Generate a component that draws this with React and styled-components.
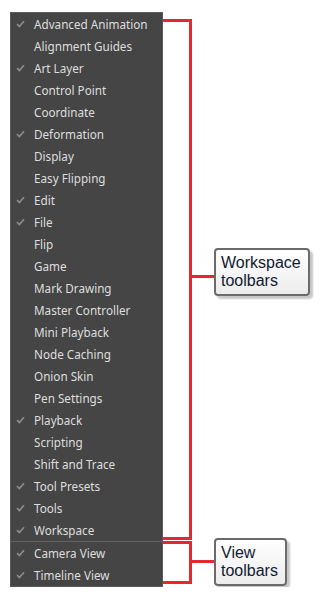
import React from 'react';
import styled, { createGlobalStyle } from 'styled-components';

const GlobalStyle = createGlobalStyle`
  html, body {
    margin: 0;
    padding: 0;
    background: #ffffff;
  }
`;

const RED = '#e3282f';

const workspaceItems = [
  { label: 'Advanced Animation', checked: true },
  { label: 'Alignment Guides' },
  { label: 'Art Layer', checked: true },
  { label: 'Control Point' },
  { label: 'Coordinate' },
  { label: 'Deformation', checked: true },
  { label: 'Display' },
  { label: 'Easy Flipping' },
  { label: 'Edit', checked: true },
  { label: 'File', checked: true },
  { label: 'Flip' },
  { label: 'Game' },
  { label: 'Mark Drawing' },
  { label: 'Master Controller' },
  { label: 'Mini Playback' },
  { label: 'Node Caching' },
  { label: 'Onion Skin' },
  { label: 'Pen Settings' },
  { label: 'Playback', checked: true },
  { label: 'Scripting' },
  { label: 'Shift and Trace' },
  { label: 'Tool Presets', checked: true },
  { label: 'Tools', checked: true },
  { label: 'Workspace', checked: true },
];

const viewItems = [
  { label: 'Camera View', checked: true },
  { label: 'Timeline View', checked: true },
];

const Page = styled.div`
  display: flex;
  align-items: flex-start;
  padding: 12px 0 0 10px;
`;

const Menu = styled.ul`
  list-style: none;
  margin: 0;
  padding: 0;
  width: 151px;
  background: #454545;
  border: 1px solid #5a5a5a;
  font-family: 'Noto Sans', 'Open Sans', sans-serif;
  font-size: 11.7px;
  color: #dedede;
`;

const Item = styled.li`
  display: flex;
  align-items: center;
  height: 22px;
  padding-left: 4px;
  white-space: nowrap;
`;

const CheckSlot = styled.span`
  display: flex;
  align-items: center;
  justify-content: center;
  width: 10px;
  margin-right: 9px;
  color: #8c8c8c;
`;

const Divider = styled.li`
  height: 1px;
  background: #626262;
`;

const Annotations = styled.div`
  display: flex;
  flex-direction: column;
  gap: 1px;
  margin-top: 7px;
`;

const Group = styled.div`
  display: flex;
  align-items: flex-start;
`;

const Bracket = styled.div`
  box-sizing: border-box;
  width: 29px;
  height: ${(p) => p.$height}px;
  border: 3px solid ${RED};
  border-left: none;
`;

const Connector = styled.div`
  width: 22px;
  height: 3px;
  margin-top: ${(p) => p.$top}px;
  background: ${RED};
`;

const Label = styled.div`
  margin-top: ${(p) => p.$top}px;
  padding: 4px 7px 4px 5px;
  border: 2px solid #6b6b6b;
  border-radius: 4px;
  background: linear-gradient(#ffffff, #ececec);
  box-shadow: 3px 3px 2px rgba(0, 0, 0, 0.22);
  font-family: 'Liberation Sans', Arial, sans-serif;
  font-size: 16px;
  line-height: 18px;
  color: #101a30;
`;

function Check() {
  return (
    <svg width="9" height="8" viewBox="0 0 9 8">
      <polyline
        points="1,4.2 3.4,6.6 8,1.2"
        fill="none"
        stroke="currentColor"
        strokeWidth="1.7"
      />
    </svg>
  );
}

function MenuItem({ label, checked }) {
  return (
    <Item>
      <CheckSlot>{checked && <Check />}</CheckSlot>
      {label}
    </Item>
  );
}

function Callout({ height, connectorTop, labelTop, children }) {
  return (
    <Group>
      <Bracket $height={height} />
      <Connector $top={connectorTop} />
      <Label $top={labelTop}>{children}</Label>
    </Group>
  );
}

export default function App() {
  return (
    <>
      <GlobalStyle />
      <Page>
        <Menu>
          {workspaceItems.map((it) => (
            <MenuItem key={it.label} {...it} />
          ))}
          <Divider />
          {viewItems.map((it) => (
            <MenuItem key={it.label} {...it} />
          ))}
        </Menu>
        <Annotations>
          <Callout height={521} connectorTop={256} labelTop={229}>
            Workspace
            <br />
            toolbars
          </Callout>
          <Callout height={43} connectorTop={19} labelTop={-3}>
            View
            <br />
            toolbars
          </Callout>
        </Annotations>
      </Page>
    </>
  );
}
